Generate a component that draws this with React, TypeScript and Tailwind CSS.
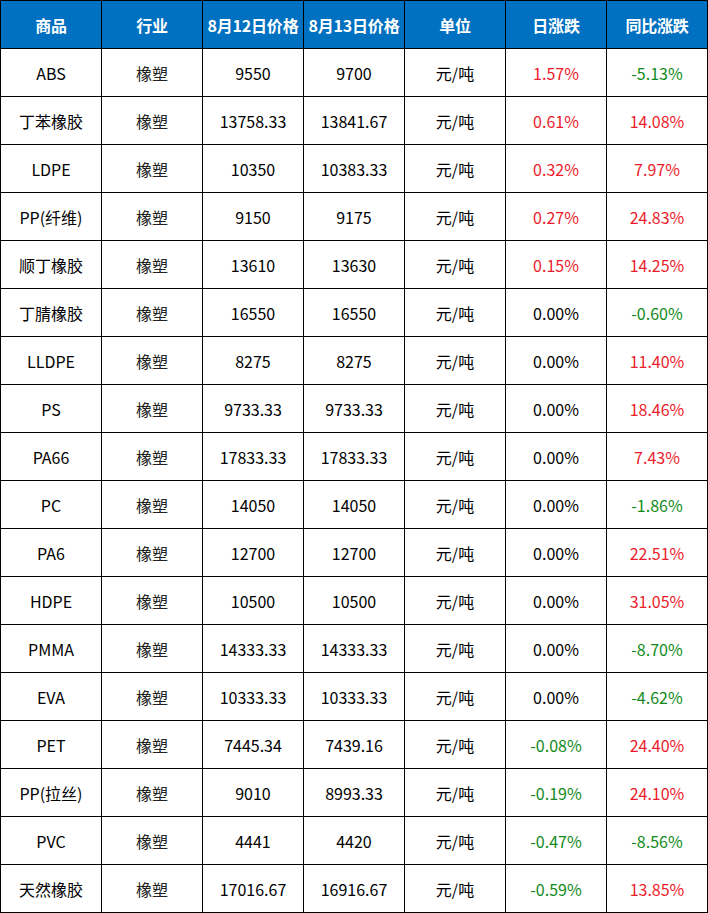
import React from "react";

const headers = ["商品", "行业", "8月12日价格", "8月13日价格", "单位", "日涨跌", "同比涨跌"];

const rows: [string, string, string, string, string][] = [
  ["ABS", "9550", "9700", "1.57%", "-5.13%"],
  ["丁苯橡胶", "13758.33", "13841.67", "0.61%", "14.08%"],
  ["LDPE", "10350", "10383.33", "0.32%", "7.97%"],
  ["PP(纤维)", "9150", "9175", "0.27%", "24.83%"],
  ["顺丁橡胶", "13610", "13630", "0.15%", "14.25%"],
  ["丁腈橡胶", "16550", "16550", "0.00%", "-0.60%"],
  ["LLDPE", "8275", "8275", "0.00%", "11.40%"],
  ["PS", "9733.33", "9733.33", "0.00%", "18.46%"],
  ["PA66", "17833.33", "17833.33", "0.00%", "7.43%"],
  ["PC", "14050", "14050", "0.00%", "-1.86%"],
  ["PA6", "12700", "12700", "0.00%", "22.51%"],
  ["HDPE", "10500", "10500", "0.00%", "31.05%"],
  ["PMMA", "14333.33", "14333.33", "0.00%", "-8.70%"],
  ["EVA", "10333.33", "10333.33", "0.00%", "-4.62%"],
  ["PET", "7445.34", "7439.16", "-0.08%", "24.40%"],
  ["PP(拉丝)", "9010", "8993.33", "-0.19%", "24.10%"],
  ["PVC", "4441", "4420", "-0.47%", "-8.56%"],
  ["天然橡胶", "17016.67", "16916.67", "-0.59%", "13.85%"],
];

function colorFor(v: string, isDaily: boolean) {
  if (v.startsWith("-")) return "text-[#118a1a]";
  if (isDaily && v === "0.00%") return "text-black";
  return "text-[#ec1c2c]";
}

export default function App() {
  return (
    <div
      className="w-[708px] h-[913px] bg-white"
      style={{ fontFamily: '"Noto Sans CJK SC", "Noto Sans", sans-serif' }}
    >
      <div className="grid grid-cols-[repeat(7,101px)] grid-rows-[repeat(19,48px)] border-r border-b border-black w-[708px]">
        {headers.map((h) => (
          <div
            key={h}
            className="flex items-center justify-center border-l border-t border-black bg-[#0070c0] text-white font-bold text-[16px] whitespace-nowrap tracking-[-0.2px]"
          >
            {h}
          </div>
        ))}
        {rows.map((r) => (
          <React.Fragment key={r[0]}>
            <div className="flex items-center justify-center border-l border-t border-black text-[16px] text-black">{r[0]}</div>
            <div className="flex items-center justify-center border-l border-t border-black text-[16px] text-[#222]">橡塑</div>
            <div className="flex items-center justify-center border-l border-t border-black text-[16px] text-black">{r[1]}</div>
            <div className="flex items-center justify-center border-l border-t border-black text-[16px] text-black">{r[2]}</div>
            <div className="flex items-center justify-center border-l border-t border-black text-[16px] text-black">元/吨</div>
            <div className={`flex items-center justify-center border-l border-t border-black text-[16px] ${colorFor(r[3], true)}`}>{r[3]}</div>
            <div className={`flex items-center justify-center border-l border-t border-black text-[16px] ${colorFor(r[4], false)}`}>{r[4]}</div>
          </React.Fragment>
        ))}
      </div>
    </div>
  );
}
